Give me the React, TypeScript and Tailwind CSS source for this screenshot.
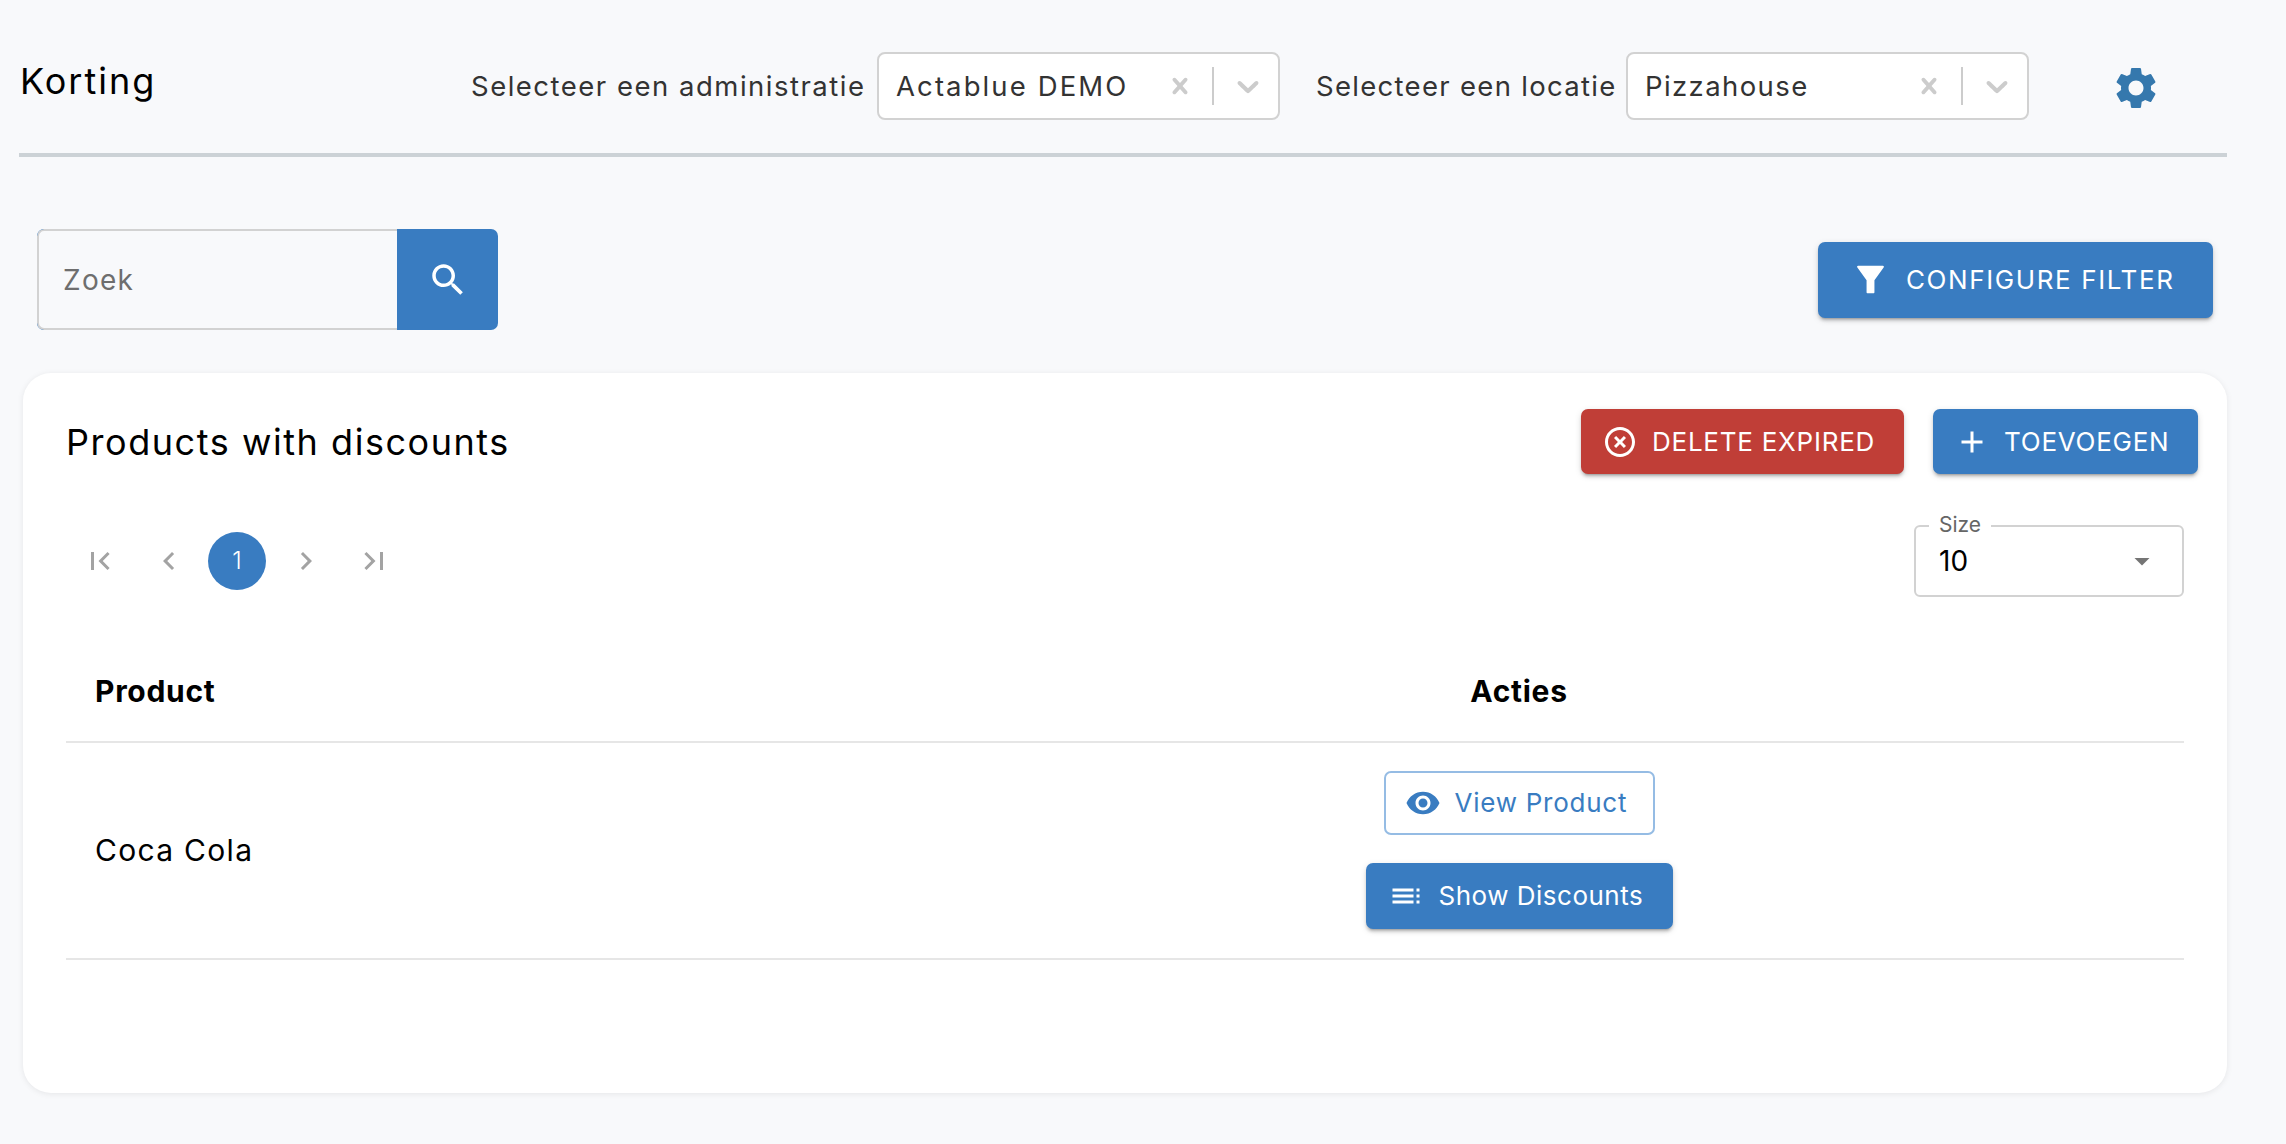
import React from "react";

const P = {
  search: "M15.5 14h-.79l-.28-.27C15.41 12.59 16 11.11 16 9.5 16 5.91 13.09 3 9.5 3S3 5.91 3 9.5 5.91 16 9.5 16c1.61 0 3.09-.59 4.23-1.57l.27.28v.79l5 4.99L20.49 19l-4.99-5zm-6 0C7.01 14 5 11.99 5 9.5S7.01 5 9.5 5 14 7.01 14 9.5 11.99 14 9.5 14z",
  gear: "M19.14 12.94c.04-.3.06-.61.06-.94 0-.32-.02-.64-.07-.94l2.03-1.58c.18-.14.23-.41.12-.61l-1.92-3.32c-.12-.22-.37-.29-.59-.22l-2.39.96c-.5-.38-1.03-.7-1.62-.94l-.36-2.54c-.04-.24-.24-.41-.48-.41h-3.84c-.24 0-.43.17-.47.41l-.36 2.54c-.59.24-1.13.57-1.62.94l-2.39-.96c-.22-.08-.47 0-.59.22L2.74 8.87c-.12.21-.08.47.12.61l2.03 1.58c-.05.3-.09.63-.09.94s.02.64.07.94l-2.03 1.58c-.18.14-.23.41-.12.61l1.92 3.32c.12.22.37.29.59.22l2.39-.96c.5.38 1.03.7 1.62.94l.36 2.54c.05.24.24.41.48.41h3.84c.24 0 .44-.17.47-.41l.36-2.54c.59-.24 1.13-.56 1.62-.94l2.39.96c.22.08.47 0 .59-.22l1.92-3.32c.12-.22.07-.47-.12-.61l-2.01-1.58zM12 15.6c-1.98 0-3.6-1.62-3.6-3.6s1.62-3.6 3.6-3.6 3.6 1.62 3.6 3.6-1.62 3.6-3.6 3.6z",
  eye: "M12 4.5C7 4.5 2.73 7.61 1 12c1.73 4.39 6 7.5 11 7.5s9.27-3.11 11-7.5c-1.73-4.39-6-7.5-11-7.5zM12 17c-2.76 0-5-2.24-5-5s2.24-5 5-5 5 2.24 5 5-2.24 5-5 5zm0-8c-1.66 0-3 1.34-3 3s1.34 3 3 3 3-1.34 3-3-1.34-3-3-3z",
  filter: "M3.5 2.5h17c.6 0 .9.7.5 1.2L14.7 12.5v8.2c0 .5-.3.8-.8.8h-3.8c-.5 0-.8-.3-.8-.8v-8.2L3 3.7C2.6 3.2 2.9 2.5 3.5 2.5z",
  off: "M14.59 8L12 10.59 9.41 8 8 9.41 10.59 12 8 14.59 9.41 16 12 13.41 14.59 16 16 14.59 13.41 12 16 9.41 14.59 8zM12 2C6.47 2 2 6.47 2 12s4.47 10 10 10 10-4.47 10-10S17.53 2 12 2zm0 18c-4.41 0-8-3.59-8-8s3.59-8 8-8 8 3.59 8 8-3.59 8-8 8z",
  add: "M19 13h-6v6h-2v-6H5v-2h6V5h2v6h6v2z",
  first: "M18.41 16.59L13.82 12l4.59-4.59L17 6l-6 6 6 6zM6 6h2v12H6z",
  prev: "M15.41 7.41L14 6l-6 6 6 6 1.41-1.41L10.83 12z",
  next: "M10 6L8.59 7.41 13.17 12l-4.58 4.59L10 18l6-6z",
  last: "M5.59 7.41L10.18 12l-4.59 4.59L7 18l6-6-6-6zM16 6h2v12h-2z",
  drop: "M7 10l5 5 5-5z",
  list: "M3 7h14v2H3zM3 11h14v2H3zM3 15h14v2H3zM19 7h2v2h-2zM19 11h2v2h-2zM19 15h2v2h-2z",
};

function Icon({ d, className }: { d: string; className: string }) {
  return (
    <svg viewBox="0 0 24 24" fill="currentColor" className={className}>
      <path d={d} />
    </svg>
  );
}

function Sel({ value, tracking }: { value: string; tracking: string }) {
  return (
    <div className="flex h-[68px] w-[403px] items-center rounded-[8px] border-2 border-[#d2d2d2] bg-white pl-[17px]">
      <span className={`flex-1 pt-[1px] text-[27.5px] text-[#333333] ${tracking}`}>{value}</span>
      <svg viewBox="0 0 20 20" fill="#cccccc" className="h-[32px] w-[32px]">
        <path d="M14.348 14.849c-0.469 0.469-1.229 0.469-1.697 0l-2.651-3.030-2.651 3.029c-0.469 0.469-1.229 0.469-1.697 0-0.469-0.469-0.469-1.229 0-1.697l2.758-3.15-2.759-3.152c-0.469-0.469-0.469-1.228 0-1.697s1.228-0.469 1.697 0l2.652 3.031 2.651-3.031c0.469-0.469 1.228-0.469 1.697 0s0.469 1.229 0 1.697l-2.758 3.152 2.758 3.15c0.469 0.469 0.469 1.229 0 1.698z" />
      </svg>
      <span className="ml-[16px] h-[38px] w-[2px] bg-[#cccccc]" />
      <svg viewBox="0 0 20 20" fill="#cccccc" className="ml-[16px] mr-[12px] h-[36px] w-[36px]">
        <path d="M4.516 7.548c0.436-0.446 1.043-0.481 1.576 0l3.908 3.747 3.908-3.747c0.533-0.481 1.141-0.446 1.576 0 0.436 0.445 0.408 1.197 0 1.615-0.406 0.418-4.695 4.502-4.695 4.502-0.217 0.223-0.502 0.335-0.789 0.335s-0.572-0.112-0.79-0.335c0 0-4.287-4.084-4.695-4.502s-0.436-1.17 0-1.615z" />
      </svg>
    </div>
  );
}

const raised = "shadow-[0_4px_2px_-3px_rgba(0,0,0,0.2),0_3px_3px_0_rgba(0,0,0,0.14),0_2px_7px_0_rgba(0,0,0,0.12)]";

function PageBtn({ d }: { d: string }) {
  return (
    <div className="flex h-[58px] w-[58px] items-center justify-center text-[#a3a3a3]">
      <Icon d={d} className="h-[36px] w-[36px]" />
    </div>
  );
}

export default function App() {
  return (
    <div
      className="h-[1144px] w-full overflow-hidden bg-[#f8f9fb] pl-[19px] pr-[59px] text-black"
      style={{ fontFamily: '"Inter", "Liberation Sans", sans-serif' }}
    >
      {/* top bar */}
      <header className="flex h-[157px] items-center border-b-[4px] border-[#ccd2d6] pt-[19px]">
        <h1 className="mb-[10px] w-[452px] pl-[1px] text-[36px] font-normal leading-none tracking-[2px]">Korting</h1>
        <span className="w-[394px] whitespace-nowrap pt-[1px] text-[27.5px] tracking-[1.5px] text-[#333333]">Selecteer een administratie</span>
        <div className="ml-[12px]"><Sel value="Actablue DEMO" tracking="tracking-[2.1px]" /></div>
        <span className="ml-[36px] w-[299px] whitespace-nowrap pt-[1px] text-[27.5px] tracking-[1.3px] text-[#333333]">Selecteer een locatie</span>
        <div className="ml-[11px]"><Sel value="Pizzahouse" tracking="tracking-[1.4px]" /></div>
        <Icon d={P.gear} className="ml-[82px] mt-[4px] h-[50px] w-[50px] text-[#3578ad]" />
      </header>

      {/* search and filter */}
      <div className="flex items-center justify-between pl-[18px] pr-[14px] pt-[72px]">
        <div className="flex h-[101px] w-[461px] overflow-hidden rounded-[7px] bg-[#397cc1]">
          <div className="flex w-[360px] items-center rounded-l-[7px] border-2 border-r-0 border-[#d2d2d2] bg-[#f8f9fb] pl-[24px] text-[28px] tracking-[1.3px] text-[#6e6e6e]">
            Zoek
          </div>
          <div className="flex flex-1 items-center justify-center text-white">
            <Icon d={P.search} className="h-[42px] w-[42px]" />
          </div>
        </div>
        <button className={`flex h-[76px] w-[395px] items-center rounded-[7px] bg-[#397cc1] pl-[35px] text-[26px] tracking-[1.6px] text-white ${raised}`}>
          <Icon d={P.filter} className="h-[35px] w-[35px]" />
          <span className="ml-[18px]">CONFIGURE FILTER</span>
        </button>
      </div>

      {/* card */}
      <section className="ml-[4px] mt-[43px] h-[720px] w-[2204px] rounded-[28px] bg-white px-[43px] pt-[36px] shadow-[0_1px_6px_rgba(0,0,0,0.08)]">
        <div className="flex items-center justify-between">
          <h2 className="text-[36px] font-normal tracking-[1.55px]">Products with discounts</h2>
          <div className="-mr-[14px] flex gap-[29px]">
            <button className={`flex h-[65px] w-[323px] items-center rounded-[7px] bg-[#c03e37] pl-[21px] text-[26px] tracking-[0.75px] text-white ${raised}`}>
              <Icon d={P.off} className="h-[36px] w-[36px]" />
              <span className="ml-[14px]">DELETE EXPIRED</span>
            </button>
            <button className={`flex h-[65px] w-[265px] items-center rounded-[7px] bg-[#397cc1] pl-[21px] text-[26px] tracking-[0.75px] text-white ${raised}`}>
              <Icon d={P.add} className="h-[36px] w-[36px]" />
              <span className="ml-[14px]">TOEVOEGEN</span>
            </button>
          </div>
        </div>

        <div className="mt-[51px] flex items-start justify-between">
          <div className="mt-[7px] flex items-center gap-[10.5px] pl-[5px]">
            <PageBtn d={P.first} />
            <PageBtn d={P.prev} />
            <div className="flex h-[58px] w-[58px] items-center justify-center rounded-full bg-[#397cc1] text-[24px] font-light text-white">1</div>
            <PageBtn d={P.next} />
            <PageBtn d={P.last} />
          </div>
          <div className="relative flex h-[72px] w-[270px] items-center rounded-[6px] border-2 border-[#d2d2d2] pl-[23px] text-[28px]">
            <span className="absolute -top-[14px] left-[13px] bg-white px-[10px] text-[21px] leading-[24px] text-[#666666]">Size</span>
            <span className="flex-1">10</span>
            <Icon d={P.drop} className="mr-[22px] h-[36px] w-[36px] text-[#757575]" />
          </div>
        </div>

        {/* table */}
        <div className="mt-[46px] grid h-[100px] grid-cols-[788px_1fr] items-center border-b-2 border-[#e6e6e6] pb-[2px]">
          <div className="pl-[29px] text-[30px] font-bold tracking-[0.7px]">Product</div>
          <div className="text-center text-[30px] font-bold tracking-[0.7px]">Acties</div>
        </div>
        <div className="grid h-[217px] grid-cols-[788px_1fr] items-center border-b-2 border-[#e6e6e6]">
          <div className="pl-[29px] text-[30px] tracking-[1.3px]">Coca Cola</div>
          <div className="flex flex-col items-center gap-[28px] pb-[2px]">
            <button className="flex h-[64px] w-[271px] items-center rounded-[7px] border-2 border-[#95bce4] bg-white pl-[19px] text-[26px] tracking-[0.75px] text-[#397cc1]">
              <Icon d={P.eye} className="h-[36px] w-[36px]" />
              <span className="ml-[14px]">View Product</span>
            </button>
            <button className={`flex h-[66px] w-[307px] items-center rounded-[7px] bg-[#397cc1] pl-[22px] text-[26px] tracking-[0.5px] text-white ${raised}`}>
              <Icon d={P.list} className="h-[36px] w-[36px]" />
              <span className="ml-[15px]">Show Discounts</span>
            </button>
          </div>
        </div>
      </section>
    </div>
  );
}
